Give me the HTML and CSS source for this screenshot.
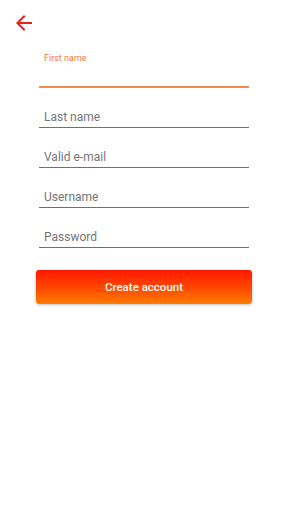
FILE: index.html
```html
<!DOCTYPE html>
<html>
<head>
<meta charset="utf-8">
<link rel="stylesheet" href="styles.css">
</head>
<body>
<div class="screen">
  <header class="topbar">
    <svg class="back" viewBox="0 0 24 24" width="24" height="24"><path d="M20 11H7.83l5.59-5.59L12 4l-8 8 8 8 1.41-1.41L7.83 13H20v-2z" fill="#e8211b"/></svg>
  </header>
  <form class="form">
    <div class="field active"><span class="float">First name</span></div>
    <div class="field"><span class="ph">Last name</span></div>
    <div class="field"><span class="ph">Valid e-mail</span></div>
    <div class="field"><span class="ph">Username</span></div>
    <div class="field"><span class="ph">Password</span></div>
    <button type="button" class="btn">Create account</button>
  </form>
</div>
</body>
</html>
```
FILE: styles.css
```css
html, body {
  margin: 0;
  padding: 0;
  background: #fff;
  font-family: Roboto, "Liberation Sans", sans-serif;
}
.screen {
  width: 288px;
  height: 512px;
  overflow: hidden;
}
.topbar {
  height: 48px;
  box-sizing: border-box;
  padding: 11px 0 0 12px;
}
.back {
  display: block;
}
.form {
  display: flex;
  flex-direction: column;
  padding: 0 39px;
  margin: 0;
}
.field {
  height: 40px;
  box-sizing: border-box;
  border-bottom: 1px solid #707070;
  display: flex;
  align-items: flex-end;
  padding: 0 0 3px 5px;
}
.field.active {
  border-bottom: 2px solid #f4894f;
  align-items: flex-start;
  padding-top: 5px;
}
.float {
  font-size: 9px;
  line-height: 10px;
  color: #ef7a3a;
}
.ph {
  font-size: 12px;
  line-height: 14px;
  color: #757575;
}
.btn {
  margin: 22px -3px 0;
  height: 34px;
  border: none;
  border-radius: 3px;
  background: linear-gradient(180deg, #ff1800 0%, #ff4a00 55%, #ff7c00 100%);
  color: #fff;
  font-family: Roboto, "Liberation Sans", sans-serif;
  font-weight: 500;
  font-size: 11.5px;
  box-shadow: 0 1px 3px rgba(0,0,0,0.25);
}
```
